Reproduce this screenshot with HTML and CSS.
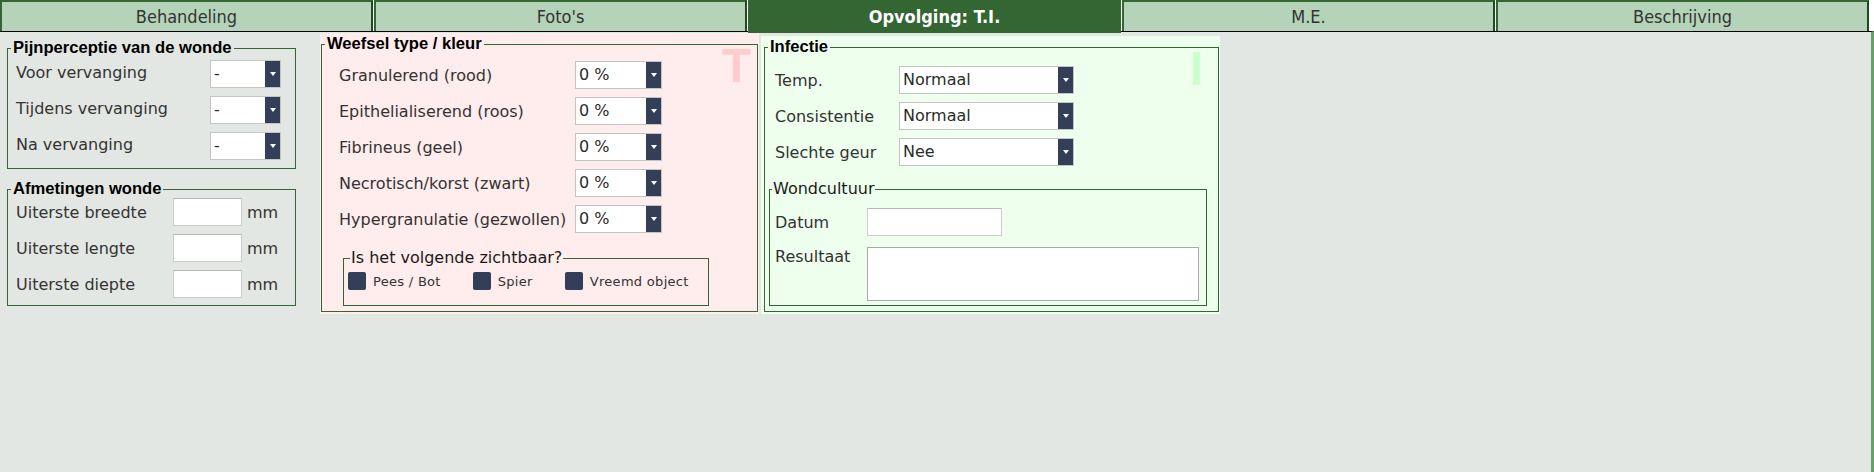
FILE: index.html
```html
<!DOCTYPE html>
<html lang="nl">
<head>
<meta charset="utf-8">
<title>Opvolging T.I.</title>
<link rel="stylesheet" href="styles.css">
</head>
<body>
<div class="tabs">
  <div class="tab">Behandeling</div>
  <div class="tab">Foto's</div>
  <div class="tab active">Opvolging: T.I.</div>
  <div class="tab">M.E.</div>
  <div class="tab">Beschrijving</div>
</div>
<div class="content">
  <div class="col-left">
    <fieldset class="box pain">
      <legend>Pijnperceptie van de wonde</legend>
      <div class="row"><span class="lbl">Voor vervanging</span><div class="sel"><span class="val">-</span><span class="arrow"></span></div></div>
      <div class="row"><span class="lbl">Tijdens vervanging</span><div class="sel"><span class="val">-</span><span class="arrow"></span></div></div>
      <div class="row"><span class="lbl">Na vervanging</span><div class="sel"><span class="val">-</span><span class="arrow"></span></div></div>
    </fieldset>
    <fieldset class="box dims">
      <legend>Afmetingen wonde</legend>
      <div class="row"><span class="lbl">Uiterste breedte</span><input class="txt" type="text"><span class="unit">mm</span></div>
      <div class="row"><span class="lbl">Uiterste lengte</span><input class="txt" type="text"><span class="unit">mm</span></div>
      <div class="row"><span class="lbl">Uiterste diepte</span><input class="txt" type="text"><span class="unit">mm</span></div>
    </fieldset>
  </div>

  <div class="panel pink">
    <span class="mark mark-t">T</span>
    <fieldset class="box tissue">
      <legend>Weefsel type / kleur</legend>
      <div class="row"><span class="lbl">Granulerend (rood)</span><div class="sel"><span class="val">0 %</span><span class="arrow"></span></div></div>
      <div class="row"><span class="lbl">Epithelialiserend (roos)</span><div class="sel"><span class="val">0 %</span><span class="arrow"></span></div></div>
      <div class="row"><span class="lbl">Fibrineus (geel)</span><div class="sel"><span class="val">0 %</span><span class="arrow"></span></div></div>
      <div class="row"><span class="lbl">Necrotisch/korst (zwart)</span><div class="sel"><span class="val">0 %</span><span class="arrow"></span></div></div>
      <div class="row"><span class="lbl">Hypergranulatie (gezwollen)</span><div class="sel"><span class="val">0 %</span><span class="arrow"></span></div></div>
      <fieldset class="box sub visible">
        <legend>Is het volgende zichtbaar?</legend>
        <div class="checks">
          <label class="chk"><span class="cb"></span>Pees / Bot</label>
          <label class="chk"><span class="cb"></span>Spier</label>
          <label class="chk"><span class="cb"></span>Vreemd object</label>
        </div>
      </fieldset>
    </fieldset>
  </div>

  <div class="panel green">
    <span class="mark mark-i">I</span>
    <fieldset class="box infect">
      <legend>Infectie</legend>
      <div class="row"><span class="lbl">Temp.</span><div class="sel"><span class="val">Normaal</span><span class="arrow"></span></div></div>
      <div class="row"><span class="lbl">Consistentie</span><div class="sel"><span class="val">Normaal</span><span class="arrow"></span></div></div>
      <div class="row"><span class="lbl">Slechte geur</span><div class="sel"><span class="val">Nee</span><span class="arrow"></span></div></div>
      <fieldset class="box sub culture">
        <legend>Wondcultuur</legend>
        <div class="row"><span class="lbl">Datum</span><input class="txt date" type="text"></div>
        <div class="row top"><span class="lbl">Resultaat</span><textarea class="area"></textarea></div>
      </fieldset>
    </fieldset>
  </div>
</div>
</body>
</html>
```
FILE: styles.css
```css
html, body {
  margin: 0;
  padding: 0;
  background: #ffffff;
}
body {
  font-family: "DejaVu Sans", Verdana, sans-serif;
  font-size: 16px;
  color: #333333;
  width: 1874px;
  height: 472px;
  overflow: hidden;
}

/* ---------- tabs ---------- */
.tabs {
  display: flex;
  gap: 1px;
  width: 1869px;
  height: 31px;
  align-items: flex-start;
}
.tab {
  flex: 1;
  box-sizing: border-box;
  height: 31px;
  border: 2px solid #336633;
  border-bottom: none;
  border-right-color: #1f4a1f;
  background: #b5d3b8;
  color: #333333;
  font-family: "DejaVu Sans Condensed", "DejaVu Sans", sans-serif;
  font-stretch: condensed;
  font-size: 18px;
  display: flex;
  align-items: center;
  justify-content: center;
}
.tab.active {
  height: 33px;
  background: #336633;
  border-color: #336633;
  color: #ffffff;
  font-weight: bold;
  position: relative;
  z-index: 2;
  padding-bottom: 2px;
}

/* ---------- content area ---------- */
.content {
  box-sizing: border-box;
  width: 1874px;
  height: 441px;
  border-top: 1px solid #000000;
  border-right: 3px solid #6a9e6a;
  background: #e3e7e3;
  display: flex;
  align-items: flex-start;
}

.box {
  margin: 0;
  padding: 0;
  min-width: 0;
  border: 1px solid #336633;
  box-sizing: border-box;
}
.box > legend {
  margin-left: 3px;
  padding: 0 2px;
  font-family: "Liberation Sans", Arial, sans-serif;
  font-weight: bold;
  font-size: 16.6px;
  line-height: 16px;
  color: #000000;
}
.box.sub > legend {
  margin-left: 2px;
  padding: 0 1px;
  font-family: "DejaVu Sans", Verdana, sans-serif;
  font-weight: normal;
  font-size: 16px;
  color: #1a1a1a;
}

.row {
  display: grid;
  align-items: center;
  height: 36px;
}
.lbl {
  white-space: nowrap;
  color: #333333;
}

/* fake select */
.sel {
  box-sizing: border-box;
  height: 28px;
  display: flex;
  background: #ffffff;
  border: 1px solid #c4c4c4;
}
.sel .val {
  flex: 1;
  padding-left: 3px;
  line-height: 26px;
  color: #2b2b2b;
  white-space: nowrap;
  overflow: hidden;
}
.sel .arrow {
  width: 15px;
  background: #333f58;
  display: flex;
  align-items: center;
  justify-content: center;
}
.sel .arrow::after {
  content: "";
  border-left: 3px solid transparent;
  border-right: 3px solid transparent;
  border-top: 4px solid #ffffff;
}

.txt {
  box-sizing: border-box;
  height: 28px;
  margin: 0;
  padding: 0 3px;
  border: 1px solid #cccccc;
  border-top-color: #b8b8b8;
  background: #ffffff;
  font: inherit;
}

/* ---------- left column ---------- */
.col-left {
  margin-left: 7px;
  width: 289px;
}
.pain {
  margin-top: 8px;
  padding-bottom: 4px;
}
.pain .row {
  grid-template-columns: 194px 71px;
  padding-left: 8px;
}
.pain .lbl {
  margin-bottom: 4px;
}
.dims {
  margin-top: 12px;
  padding-bottom: 0;
}
.dims .row {
  grid-template-columns: 157px 69px auto;
  padding-left: 8px;
  height: 30px;
  margin-bottom: 6px;
}
.dims .txt {
  width: 69px;
}
.unit {
  margin-left: 5px;
  color: #333333;
}

/* ---------- panels ---------- */
.panel {
  position: relative;
  box-sizing: border-box;
}
.mark {
  position: absolute;
  top: 8px;
  font-family: "Liberation Sans", Arial, sans-serif;
  font-weight: bold;
  font-size: 48px;
  line-height: 49px;
}
.pink {
  margin-left: 24px;
  margin-top: 1px;
  width: 439px;
  padding: 3px 1px 2px 1px;
  background: #ffecec;
}
.mark-t {
  right: 8px;
  color: #ffcccc;
}
.tissue {
  position: relative;
  padding-top: 5px;
}
.tissue > .row {
  grid-template-columns: 236px 87px;
  padding-left: 17px;
}
.visible {
  margin: 13px 0 5px 21px;
  width: 366px;
  padding: 6px 4px 15px 4px;
}
.checks {
  display: flex;
  gap: 32px;
}
.chk {
  display: flex;
  align-items: center;
  gap: 7px;
  font-size: 13px;
  letter-spacing: 0.3px;
  color: #333333;
  white-space: nowrap;
}
.cb {
  width: 18px;
  height: 18px;
  border-radius: 2px;
  background: #333f58;
}

.green {
  margin-left: 2px;
  margin-top: 4px;
  width: 459px;
  padding: 3px 1px 2px 3px;
  background: #eeffee;
}
.mark-i {
  right: 17px;
  color: #ccffcc;
}
.infect {
  position: relative;
  padding-top: 7px;
}
.infect > .row {
  grid-template-columns: 124px 175px;
  padding-left: 10px;
}
.culture {
  margin: 11px 11px 5px 4px;
  padding-top: 7px;
  padding-bottom: 4px;
}
.culture .row {
  grid-template-columns: 92px auto;
  padding-left: 5px;
}
.culture .row.top {
  height: auto;
  margin-top: 7px;
  align-items: start;
}
.culture .row.top .lbl {
  line-height: 20px;
}
.date {
  width: 135px;
}
.area {
  display: block;
  box-sizing: border-box;
  width: 332px;
  height: 54px;
  margin: 0;
  padding: 2px 3px;
  border: 1px solid #a8a8a8;
  background: #ffffff;
  resize: none;
  font: inherit;
}
```
